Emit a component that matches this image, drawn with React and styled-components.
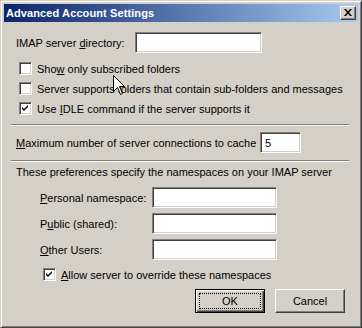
import React from 'react';
import styled, { createGlobalStyle } from 'styled-components';

const GlobalStyle = createGlobalStyle`
  html, body {
    margin: 0;
    padding: 0;
    background: #d4d0c8;
  }
  body {
    font-family: Tahoma, "Liberation Sans", Arial, sans-serif;
    font-size: 11px;
    color: #000;
  }
`;

const Window = styled.div`
  position: relative;
  box-sizing: border-box;
  width: 362px;
  height: 328px;
  background: #d4d0c8;
  border: 1px solid;
  border-color: #d4d0c8 #404040 #404040 #d4d0c8;
  box-shadow: inset 1px 1px #fff, inset -1px -1px #808080;
  padding: 3px;
  display: flex;
  flex-direction: column;
`;

const TitleBar = styled.div`
  height: 18px;
  display: flex;
  align-items: center;
  justify-content: space-between;
  padding: 0 2px 1px 2px;
  box-sizing: border-box;
  background: linear-gradient(to right, #0a246a, #a6caf0);
`;

const Title = styled.span`
  color: #fff;
  font-weight: bold;
  font-size: 11px;
  letter-spacing: 0.1px;
`;

const CloseButton = styled.div`
  width: 16px;
  height: 14px;
  box-sizing: border-box;
  background: #d4d0c8;
  border: 1px solid;
  border-color: #fff #404040 #404040 #fff;
  box-shadow: inset -1px -1px #808080;
  display: flex;
  align-items: center;
  justify-content: center;
`;

const Body = styled.div`
  display: flex;
  flex-direction: column;
  padding: 0 9px 0 7px;
`;

const Row = styled.div`
  display: flex;
  align-items: center;
  margin-top: ${p => p.$top || 0}px;
  margin-left: ${p => p.$indent || 0}px;
  height: ${p => p.$height || 21}px;
`;

const Label = styled.span`
  width: ${p => p.$width}px;
  flex-shrink: 0;
  white-space: nowrap;
`;

const TextBox = styled.div`
  box-sizing: border-box;
  width: ${p => p.$width}px;
  height: 21px;
  background: #fff;
  border: 1px solid;
  border-color: #808080 #fff #fff #808080;
  box-shadow: inset 1px 1px #404040, inset -1px -1px #d4d0c8;
  padding: 0 4px;
  display: flex;
  align-items: center;
`;

const CheckList = styled.div`
  display: flex;
  flex-direction: column;
  gap: 7px;
  margin-top: ${p => p.$top || 0}px;
  margin-left: ${p => p.$indent || 0}px;
`;

const CheckRow = styled.div`
  display: flex;
  align-items: center;
  gap: 5px;
  height: 13px;
  white-space: nowrap;
`;

const Box = styled.div`
  box-sizing: border-box;
  width: 13px;
  height: 13px;
  flex-shrink: 0;
  background: #fff;
  border: 1px solid;
  border-color: #808080 #fff #fff #808080;
  box-shadow: inset 1px 1px #404040, inset -1px -1px #d4d0c8;
  display: flex;
  align-items: center;
  justify-content: center;
`;

const Separator = styled.div`
  margin-top: ${p => p.$top}px;
  border-top: 1px solid #808080;
  border-bottom: 1px solid #fff;
`;

const Note = styled.div`
  margin-top: ${p => p.$top}px;
  margin-left: 5px;
  line-height: 13px;
`;

const ButtonRow = styled.div`
  display: flex;
  justify-content: flex-end;
  gap: 10px;
  margin-top: 8px;
  margin-right: 4px;
`;

const Button = styled.div`
  box-sizing: border-box;
  width: 70px;
  height: 24px;
  background: #d4d0c8;
  border: 1px solid;
  border-color: ${p => (p.$default ? '#000' : '#fff #404040 #404040 #fff')};
  box-shadow: ${p =>
    p.$default
      ? 'inset 1px 1px #fff, inset -1px -1px #404040, inset -2px -2px #808080'
      : 'inset -1px -1px #808080'};
  display: flex;
  align-items: center;
  justify-content: center;
  padding: 3px;
`;

const Focus = styled.div`
  flex: 1;
  align-self: stretch;
  border: 1px dotted #000;
  display: flex;
  align-items: center;
  justify-content: center;
`;

const Key = styled.span`
  text-decoration: underline;
  text-underline-offset: 1px;
`;

const Cursor = styled.svg`
  position: absolute;
  left: 112px;
  top: 74px;
`;

const Check = () => (
  <svg width="7" height="7" viewBox="0 0 7 7">
    <path d="M0 2 L2 4 L6 0 L6 2 L2 6 L0 4 Z" fill="#000" />
  </svg>
);

export default function App() {
  return (
    <>
      <GlobalStyle />
      <Window>
        <TitleBar>
          <Title>Advanced Account Settings</Title>
          <CloseButton>
            <svg width="8" height="7" viewBox="0 0 8 7">
              <path d="M0 0h2l2 2.5L6 0h2L5 3.5 8 7H6L4 4.5 2 7H0l3-3.5z" fill="#000" />
            </svg>
          </CloseButton>
        </TitleBar>
        <Body>
          <Row $top={10} $indent={5}>
            <Label $width={119}>
              IMAP server <Key>d</Key>irectory:
            </Label>
            <TextBox $width={127} />
          </Row>
          <CheckList $top={9} $indent={8}>
            <CheckRow>
              <Box />
              <span>
                Sho<Key>w</Key> only subscribed folders
              </span>
            </CheckRow>
            <CheckRow>
              <Box />
              <span>Server supports folders that contain sub-folders and messages</span>
            </CheckRow>
            <CheckRow>
              <Box>
                <Check />
              </Box>
              <span>
                Use <Key>I</Key>DLE command if the server supports it
              </span>
            </CheckRow>
          </CheckList>
          <Separator $top={9} />
          <Row $top={6} $indent={5}>
            <Label $width={244}>
              <Key>M</Key>aximum number of server connections to cache
            </Label>
            <TextBox $width={41}>5</TextBox>
          </Row>
          <Separator $top={7} />
          <Note $top={4}>These preferences specify the namespaces on your IMAP server</Note>
          <Row $top={8} $indent={29}>
            <Label $width={112}>
              <Key>P</Key>ersonal namespace:
            </Label>
            <TextBox $width={125} />
          </Row>
          <Row $top={5} $indent={29}>
            <Label $width={112}>
              P<Key>u</Key>blic (shared):
            </Label>
            <TextBox $width={125} />
          </Row>
          <Row $top={5} $indent={29}>
            <Label $width={112}>
              <Key>O</Key>ther Users:
            </Label>
            <TextBox $width={125} />
          </Row>
          <CheckList $top={8} $indent={32}>
            <CheckRow>
              <Box>
                <Check />
              </Box>
              <span>
                <Key>A</Key>llow server to override these namespaces
              </span>
            </CheckRow>
          </CheckList>
          <ButtonRow>
            <Button $default>
              <Focus>OK</Focus>
            </Button>
            <Button>Cancel</Button>
          </ButtonRow>
        </Body>
        <Cursor width="13" height="21" viewBox="0 0 13 21">
          <path
            d="M0.5 0.5 L0.5 16.5 L4.5 12.5 L7.5 19.5 L9.5 18.5 L6.5 11.5 L11.5 11.5 Z"
            fill="#fff"
            stroke="#000"
            strokeWidth="1"
          />
        </Cursor>
      </Window>
    </>
  );
}
